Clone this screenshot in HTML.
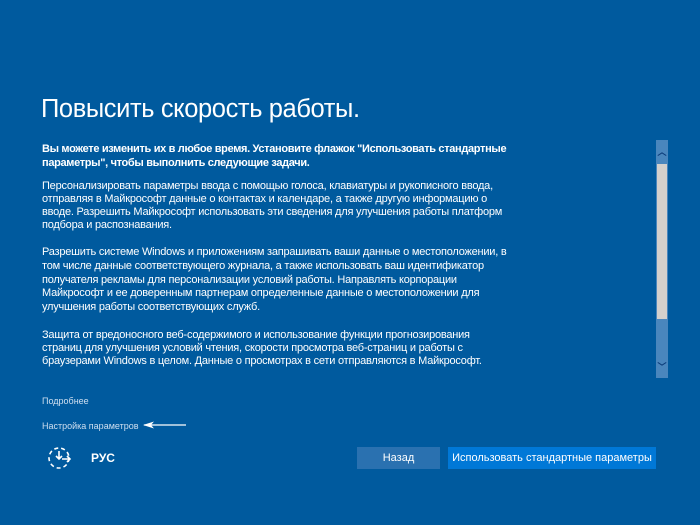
<!DOCTYPE html>
<html><head><meta charset="utf-8"><style>
html,body{margin:0;padding:0}
body{width:700px;height:525px;background:#005a9e;position:relative;overflow:hidden;font-family:"Liberation Sans",sans-serif;color:#fff}
.t{position:absolute;left:41px;top:95px;font-size:25.5px;font-weight:300;letter-spacing:-0.4px;color:#fff}
.l{position:absolute;left:42px;font-size:11px;white-space:nowrap;line-height:15px;letter-spacing:-0.22px}
.b{font-weight:bold;letter-spacing:-0.33px}
.sb{position:absolute;left:656px;top:140px;width:12px;height:238px;background:#4a86bd}
.th{position:absolute;left:657px;top:164px;width:10px;height:155px;background:#d4d0cc}
.ar{position:absolute;left:656px;width:12px;text-align:center;font-size:9px;color:#0a3a78;font-weight:bold}
.lk{position:absolute;left:42px;font-size:9px;color:#cfdff0}
.btn{position:absolute;top:447px;height:22px;line-height:22px;text-align:center;font-size:11px;color:#fff}
</style></head><body>
<div class="t">Повысить скорость работы.</div>
<div class="l b" style="top:142px">Вы можете изменить их в любое время. Установите флажок "Использовать стандартные</div>
<div class="l b" style="top:156px">параметры", чтобы выполнить следующие задачи.</div>
<div class="l" style="top:179px">Персонализировать параметры ввода с помощью голоса, клавиатуры и рукописного ввода,</div>
<div class="l" style="top:192px">отправляя в Майкрософт данные о контактах и календаре, а также другую информацию о</div>
<div class="l" style="top:205px">вводе. Разрешить Майкрософт использовать эти сведения для улучшения работы платформ</div>
<div class="l" style="top:218px">подбора и распознавания.</div>
<div class="l" style="top:245px">Разрешить системе Windows и приложениям запрашивать ваши данные о местоположении, в</div>
<div class="l" style="top:259px">том числе данные соответствующего журнала, а также использовать ваш идентификатор</div>
<div class="l" style="top:273px">получателя рекламы для персонализации условий работы. Направлять корпорации</div>
<div class="l" style="top:286px">Майкрософт и ее доверенным партнерам определенные данные о местоположении для</div>
<div class="l" style="top:300px">улучшения работы соответствующих служб.</div>
<div class="l" style="top:328px">Защита от вредоносного веб-содержимого и использование функции прогнозирования</div>
<div class="l" style="top:341px">страниц для улучшения условий чтения, скорости просмотра веб-страниц и работы с</div>
<div class="l" style="top:354px">браузерами Windows в целом. Данные о просмотрах в сети отправляются в Майкрософт.</div>
<div class="sb"></div><div class="th"></div>
<div class="ar" style="top:145px">︿</div>
<div class="ar" style="top:360px">﹀</div>
<div class="lk" style="top:396px">Подробнее</div>
<div class="lk" style="top:421px">Настройка параметров</div>
<svg style="position:absolute;left:140px;top:420px" width="50" height="10"><line x1="4" y1="5" x2="46" y2="5" stroke="#fff" stroke-width="1.3"/><path d="M3 5 L14 1.5 L11 5 L14 8.5 Z" fill="#fff"/></svg>
<svg style="position:absolute;left:46px;top:445px" width="28" height="26"><circle cx="13" cy="13" r="10" fill="none" stroke="#fff" stroke-width="1.6" stroke-dasharray="4 3"/><path d="M13 6 V14 M10 11 L13 14 L16 11 M16 14 H24 M21 11 L24 14 L21 17" fill="none" stroke="#fff" stroke-width="1.6"/></svg>
<div style="position:absolute;left:91px;top:451px;font-size:12px;font-weight:bold">РУС</div>
<div class="btn" style="left:357px;width:83px;background:#2a71b0">Назад</div>
<div class="btn" style="left:448px;width:208px;background:#0078d7">Использовать стандартные параметры</div>
</body></html>
